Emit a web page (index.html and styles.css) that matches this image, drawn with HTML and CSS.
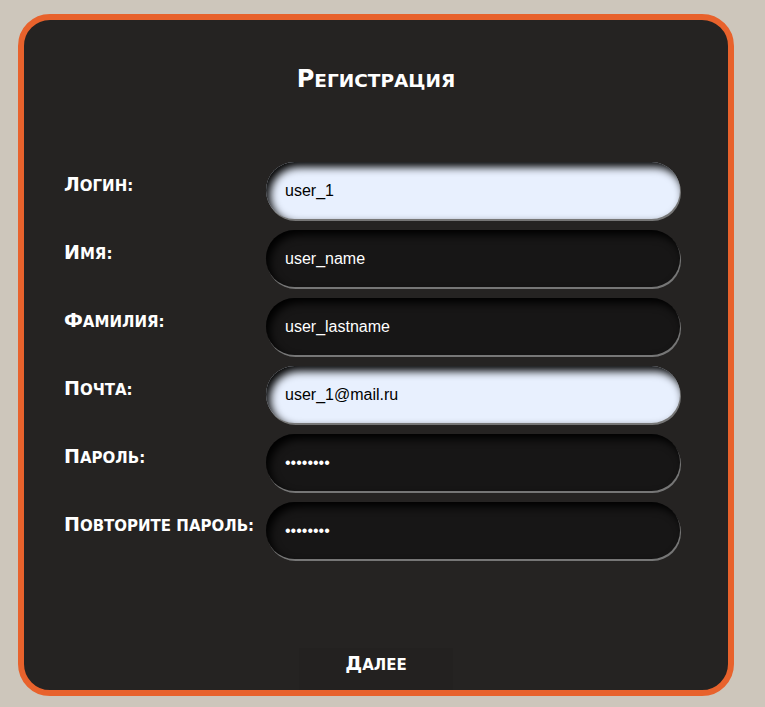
FILE: index.html
```html
<!DOCTYPE html>
<html lang="ru">
<head>
<meta charset="utf-8">
<title>Регистрация</title>
<link rel="stylesheet" href="styles.css">
</head>
<body>
<div class="card">
  <h1 class="title">Регистрация</h1>
  <form class="form">
    <label class="label" for="login">Логин:</label>
    <input class="field filled" id="login" type="text" value="user_1">
    <label class="label" for="name">Имя:</label>
    <input class="field" id="name" type="text" value="user_name">
    <label class="label" for="lastname">Фамилия:</label>
    <input class="field" id="lastname" type="text" value="user_lastname">
    <label class="label" for="mail">Почта:</label>
    <input class="field filled" id="mail" type="text" value="user_1@mail.ru">
    <label class="label" for="pass">Пароль:</label>
    <input class="field" id="pass" type="password" value="12345678">
    <label class="label" for="pass2">Повторите пароль:</label>
    <input class="field" id="pass2" type="password" value="12345678">
  </form>
  <div class="actions">
    <button class="btn" type="button"><span class="btn-text">Далее</span></button>
  </div>
</div>
</body>
</html>
```

FILE: styles.css
```css
html, body {
  margin: 0;
  padding: 0;
}
body {
  background: #cdc6bb;
  padding: 14px 0 0 18px;
  font-family: "Liberation Sans", Arial, sans-serif;
}
.card {
  box-sizing: border-box;
  width: 716px;
  height: 682px;
  border: 6px solid #e8622c;
  border-radius: 32px;
  background: #252322;
  display: flex;
  flex-direction: column;
}
.title {
  margin: 45px 0 0;
  text-align: center;
  color: #fff;
  font-family: "DejaVu Sans", Verdana, sans-serif;
  font-size: 18.5px;
  line-height: 28px;
  font-weight: bold;
  text-transform: uppercase;
}
.title::first-letter {
  font-size: 24px;
}
.form {
  margin: 67px 0 0;
  padding-left: 40px;
  display: grid;
  grid-template-columns: 202px 414px;
  grid-auto-rows: 57px;
  row-gap: 11px;
}
.label {
  color: #fff;
  font-family: "DejaVu Sans", Verdana, sans-serif;
  font-size: 15px;
  font-weight: bold;
  text-transform: uppercase;
  line-height: 22px;
  padding-top: 11px;
  white-space: nowrap;
}
.label::first-letter {
  font-size: 19px;
}
.field {
  box-sizing: border-box;
  height: 57px;
  width: 414px;
  border: none;
  border-radius: 29px;
  background: #171616;
  color: #fff;
  font-family: "Liberation Sans", Arial, sans-serif;
  font-size: 16px;
  padding: 0 19px;
  outline: none;
  box-shadow: inset 4px 5px 8px #000, 1px 2px 0 #767676;
}
.field.filled {
  background: #e8f0fe;
  color: #000;
}
.actions {
  margin-top: auto;
  display: flex;
  justify-content: center;
}
.btn {
  width: 154px;
  height: 42px;
  padding: 3px 0 0;
  border: none;
  background: #232120;
  color: #fff;
  font-family: "DejaVu Sans", Verdana, sans-serif;
  font-weight: bold;
  display: flex;
  flex-direction: column;
  justify-content: flex-start;
  align-items: stretch;
}
.btn-text {
  display: block;
  text-align: center;
  font-size: 15px;
  line-height: 24px;
  text-transform: uppercase;
}
.btn-text::first-letter {
  font-size: 19px;
}
```
